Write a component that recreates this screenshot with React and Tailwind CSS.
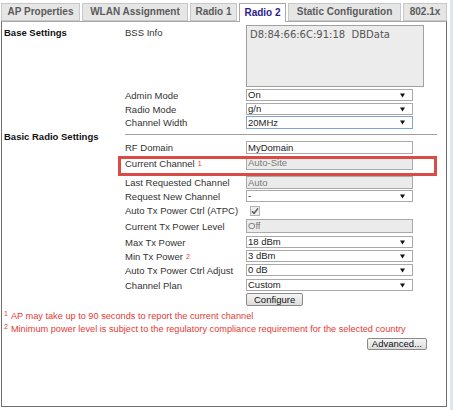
import React from "react";
import { clsx } from "clsx";

const tabs = [
  { label: "AP Properties", w: "w-[79px]" },
  { label: "WLAN Assignment", w: "w-[106px]" },
  { label: "Radio 1", w: "w-[47px]" },
  { label: "Radio 2", w: "w-[47px]", active: true },
  { label: "Static Configuration", w: "w-[113px]" },
  { label: "802.1x", w: "w-[44px]" },
];

const Arrow = () => (
  <svg width="5" height="5" viewBox="0 0 5 5" className="shrink-0">
    <path d="M0 0.5 H5 L2.5 4.5 Z" fill="#111" />
  </svg>
);

const Select = ({ value, focused }) => (
  <div
    className={clsx(
      "w-[167px] h-full flex items-center justify-between pl-[1px] pr-[7px] bg-white text-[#222] border",
      focused ? "border-[#7fa4d4]" : "border-[#a9a9a9]"
    )}
  >
    <span>{value}</span>
    <Arrow />
  </div>
);

const Input = ({ value, disabled }) => (
  <div
    className={clsx(
      "w-[167px] h-full flex items-center pl-[1px] border border-[#a9a9a9]",
      disabled ? "bg-[#ebebeb] text-[#7a7a7a]" : "bg-white text-[#222]"
    )}
  >
    {value}
  </div>
);

const Btn = ({ children, px = "px-[7px]" }) => (
  <div className={clsx("h-full flex items-center border border-[#8a8a8a] rounded-[2px] bg-gradient-to-b from-[#f6f6f6] to-[#dcdcdc] text-[#111]", px)}>
    {children}
  </div>
);

const Sup = ({ n }) => (
  <sup className="text-[#e53935] text-[7px] ml-[3px] relative -top-[1px]">{n}</sup>
);

// one row of the form: label in the middle column, control on the right
const Row = ({ label, h, mt, children }) => (
  <div className={clsx("flex items-center", h, mt)}>
    <div className="w-[121px] text-[#333] whitespace-nowrap pt-[1px]">{label}</div>
    <div className="h-full flex items-center">{children}</div>
  </div>
);

export default function App() {
  return (
    <div className="relative w-[453px] h-[410px] flex bg-white overflow-hidden font-['Liberation_Sans',Arial,sans-serif] text-[9.5px] leading-[12px]">
      <div className="w-[450px] pt-[3px] pl-[1px]">
        {/* tabs */}
        <div className="relative z-10 flex gap-[2px] h-[18px] items-start">
          {tabs.map((t) => (
            <div
              key={t.label}
              className={clsx(
                "flex items-center justify-center font-bold text-[10px] whitespace-nowrap border",
                t.w,
                t.active
                  ? "h-[19px] bg-white border-[#a8a8a8] border-b-0 text-[#2c1b8c]"
                  : "h-[18px] bg-[#e6e6e6] border-[#c8c8c8] text-[#5b5b5b]"
              )}
            >
              {t.label}
            </div>
          ))}
        </div>

        {/* panel */}
        <div className="w-[446px] h-[386px] border border-[#6f6f6f] border-t-[#a8a8a8] pl-[2px]">
          {/* Base Settings */}
          <div className="flex mt-[3px]">
            <div className="w-[121px] font-bold text-[#111] pt-[2px]">Base Settings</div>
            <div className="w-[121px] text-[#333] pt-[2px]">BSS Info</div>
            <div className="w-[178px] h-[62px] bg-[#ececec] border border-[#a0a0a0] px-[3px] pt-[3px] text-[#555] font-['DejaVu_Sans',Verdana,sans-serif] text-[10px]">
              D8:84:66:6C:91:18&nbsp;&nbsp;DBData
            </div>
          </div>
          <div className="pl-[121px]">
            <Row label="Admin Mode" h="h-[12px]" mt="mt-[2px]">
              <Select value="On" />
            </Row>
            <Row label="Radio Mode" h="h-[12px]" mt="mt-[2px]">
              <Select value="g/n" />
            </Row>
            <Row label="Channel Width" h="h-[13px]" mt="mt-[1px]">
              <Select value="20MHz" focused />
            </Row>
          </div>

          {/* Basic Radio Settings */}
          <div className="flex">
            <div className="w-[121px] font-bold text-[#111] pt-[2px] whitespace-nowrap">Basic Radio Settings</div>
            <div className="flex flex-col">
              <div className="mt-[5px] w-[312px] h-px bg-[#a0a0a0]" />
              <Row label="RF Domain" h="h-[13px]" mt="mt-[6px]">
                <Input value="MyDomain" />
              </Row>
              <Row label={<>Current Channel<Sup n="1" /></>} h="h-[14px]" mt="mt-[2px]">
                <Input value="Auto-Site" disabled />
              </Row>
              <Row label="Last Requested Channel" h="h-[13px]" mt="mt-[6px]">
                <Input value="Auto" disabled />
              </Row>
              <Row label="Request New Channel" h="h-[12px]" mt="mt-[1px]">
                <Select value="-" />
              </Row>
              <Row label="Auto Tx Power Ctrl (ATPC)" h="h-[13px]" mt="mt-[2px]">
                <div className="ml-[4px] w-[10px] h-[10px] border border-[#b4b4b4] bg-[#ececec] flex items-center justify-center">
                  <svg width="8" height="8" viewBox="0 0 8 8">
                    <path d="M1 4.2 L3 6.4 L7 1.4" fill="none" stroke="#555" strokeWidth="1.5" />
                  </svg>
                </div>
              </Row>
              <Row label="Current Tx Power Level" h="h-[14px]" mt="mt-[2px]">
                <Input value="Off" disabled />
              </Row>
              <Row label="Max Tx Power" h="h-[12px]" mt="mt-[3px]">
                <Select value="18 dBm" />
              </Row>
              <Row label={<>Min Tx Power<Sup n="2" /></>} h="h-[12px]" mt="mt-[2px]">
                <Select value="3 dBm" />
              </Row>
              <Row label="Auto Tx Power Ctrl Adjust" h="h-[12px]" mt="mt-[2px]">
                <Select value="0 dB" />
              </Row>
              <Row label="Channel Plan" h="h-[12px]" mt="mt-[3px]">
                <Select value="Custom" />
              </Row>
              <Row label="" h="h-[13px]" mt="mt-[2px]">
                <Btn>Configure</Btn>
              </Row>
            </div>
          </div>

          {/* footnotes */}
          <div className="mt-[4px] text-[#e53935] text-[9.2px] leading-[13px] whitespace-nowrap">
            <div>
              <sup className="text-[7px] mr-[3px]">1</sup>AP may take up to 90 seconds to report the current channel
            </div>
            <div>
              <sup className="text-[7px] mr-[3px]">2</sup>Minimum power level is subject to the regulatory compliance requirement for the selected country
            </div>
          </div>
          <div className="flex justify-end pr-[19px] mt-[2px] h-[12px]">
            <Btn px="px-[4px]">Advanced...</Btn>
          </div>
        </div>
      </div>
      <div className="flex-1 bg-[#d9e6f4]" />

      {/* red highlight drawn over the form */}
      <div className="absolute left-[118px] top-[156px] w-[319px] h-[20px] border-[3px] border-[#dc4a45]" />
    </div>
  );
}
